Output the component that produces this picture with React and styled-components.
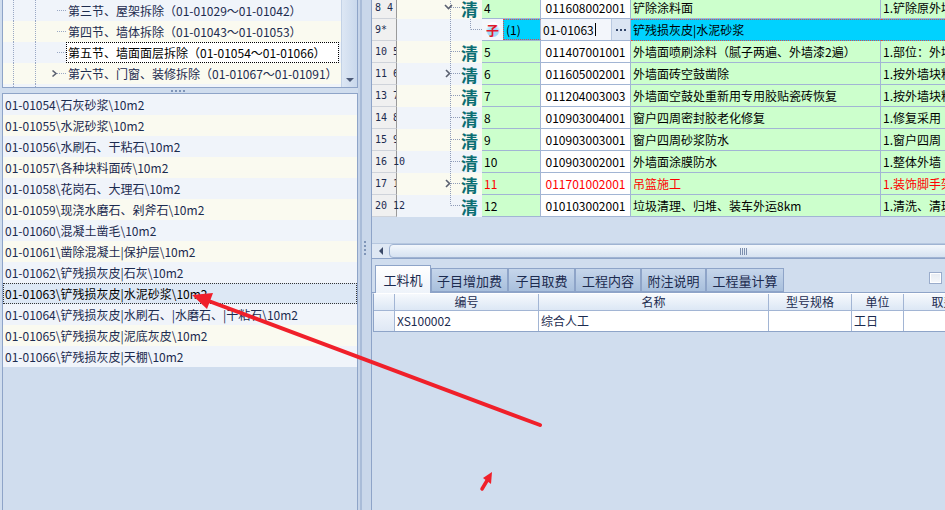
import React from 'react';
import styled, { createGlobalStyle } from 'styled-components';

const GlobalStyle = createGlobalStyle`
  html, body {
    margin: 0;
    padding: 0;
    background: #d0ddee;
  }
  body {
    font-family: "Noto Sans CJK SC", "Liberation Sans", sans-serif;
    font-size: 12px;
  }
`;

const treeItems = [
  { text: '第三节、屋架拆除（01-01029～01-01042）' },
  { text: '第四节、墙体拆除（01-01043～01-01053）' },
  { text: '第五节、墙面面层拆除（01-01054～01-01066）', selected: true },
  { text: '第六节、门窗、装修拆除（01-01067～01-01091）', expandable: true },
  { text: '第七节、地面拆除（01-01092～01-01110）' },
];

const listItems = [
  '01-01054\\石灰砂浆\\10m2',
  '01-01055\\水泥砂浆\\10m2',
  '01-01056\\水刷石、干粘石\\10m2',
  '01-01057\\各种块料面砖\\10m2',
  '01-01058\\花岗石、大理石\\10m2',
  '01-01059\\现浇水磨石、剁斧石\\10m2',
  '01-01060\\混凝土凿毛\\10m2',
  '01-01061\\凿除混凝土|保护层\\10m2',
  '01-01062\\铲残损灰皮|石灰\\10m2',
  '01-01063\\铲残损灰皮|水泥砂浆\\10m2',
  '01-01064\\铲残损灰皮|水刷石、|水磨石、|干粘石\\10m2',
  '01-01065\\铲残损灰皮|泥底灰皮\\10m2',
  '01-01066\\铲残损灰皮|天棚\\10m2',
];

// spill: the second number runs over into the tree column
const gridRows = [
  { hdr: '8 4', chevron: 'down', seq: '4', code: '011608002001', name: '铲除涂料面', desc: '1.铲除原外墙涂料' },
  { hdr: '9*', child: true, seq: '(1)', code: '01-01063', name: '铲残损灰皮|水泥砂浆', desc: '' },
  { hdr: '10 5', seq: '5', code: '011407001001', name: '外墙面喷刷涂料（腻子两遍、外墙漆2遍）', desc: '1.部位：外墙面' },
  { hdr: '11 6', chevron: 'right', seq: '6', code: '011605002001', name: '外墙面砖空鼓凿除', desc: '1.按外墙块料' },
  { hdr: '13 7', seq: '7', code: '011204003003', name: '外墙面空鼓处重新用专用胶贴瓷砖恢复', desc: '1.按外墙块料' },
  { hdr: '14 8', seq: '8', code: '010903004001', name: '窗户四周密封胶老化修复', desc: '1.修复采用' },
  { hdr: '15 9', seq: '9', code: '010903003001', name: '窗户四周砂浆防水', desc: '1.窗户四周' },
  { hdr: '16 10', spill: true, seq: '10', code: '010903002001', name: '外墙面涂膜防水', desc: '1.整体外墙' },
  { hdr: '17 11', chevron: 'right', red: true, seq: '11', code: '011701002001', name: '吊篮施工', desc: '1.装饰脚手架' },
  { hdr: '20 12', spill: true, last: true, seq: '12', code: '010103002001', name: '垃圾清理、归堆、装车外运8km', desc: '1.清洗、清理' },
];

const tabs = [
  { label: '工料机', width: 56, active: true },
  { label: '子目增加费', width: 77 },
  { label: '子目取费', width: 67 },
  { label: '工程内容', width: 66 },
  { label: '附注说明', width: 65 },
  { label: '工程量计算', width: 78 },
];

const subCols = [
  { label: '', width: 21 },
  { label: '编号', width: 144 },
  { label: '名称', width: 230 },
  { label: '型号规格', width: 83 },
  { label: '单位', width: 52 },
  { label: '取费', width: 80 },
];

const subRow = ['', 'XS100002', '综合人工', '', '工日', ''];

const App = () => (
  <>
    <GlobalStyle />
    <Screen>
      <LeftPane>
        <TreePanel>
          <TreeBody>
            {treeItems.map((item, i) => (
              <TreeRow key={i} $alt={i % 2 === 1}>
                <Connectors width="66" height="21">
                  <line x1="10.5" y1="0" x2="10.5" y2="21" stroke="#9aa8c4" strokeDasharray="1 1" />
                  <line x1="32.5" y1="0" x2="32.5" y2="21" stroke="#9aa8c4" strokeDasharray="1 1" />
                  <line x1="54" y1="10.5" x2="63" y2="10.5" stroke="#9aa8c4" strokeDasharray="1 1" />
                  {item.expandable && (
                    <path d="M49.5 7.5 L53 10.5 L49.5 13.5" fill="none" stroke="#5a6070" strokeWidth="1.6" />
                  )}
                </Connectors>
                <TreeLabel $selected={item.selected}>{item.text}</TreeLabel>
              </TreeRow>
            ))}
          </TreeBody>
          <VScroll>
            <DownArrow />
          </VScroll>
        </TreePanel>
        <HSplitter>
          <Grip />
        </HSplitter>
        <ListPanel>
          {listItems.map((t, i) => (
            <ListRow key={i} $alt={i % 2 === 1} $selected={i === 9}>
              {t}
            </ListRow>
          ))}
        </ListPanel>
      </LeftPane>

      <VSplitter>
        <VGrip />
      </VSplitter>

      <RightPane>
        <TopGrid>
          <GridRows>
            {gridRows.map((r, i) => (
              <GridRow key={i}>
                <RowHeader $spill={r.spill}>{r.hdr}</RowHeader>
                <TreeCell $alt={i % 2 === 1}>
                  <Connectors width="85" height="21">
                    <line x1="53.5" y1="0" x2="53.5" y2={r.last ? 10.5 : 21} stroke="#8f9cb8" strokeDasharray="1 1" />
                    {!r.child && <line x1="54" y1="10.5" x2="64" y2="10.5" stroke="#8f9cb8" strokeDasharray="1 1" />}
                    {r.child && (
                      <>
                        <line x1="73.5" y1="0" x2="73.5" y2="10.5" stroke="#8f9cb8" strokeDasharray="1 1" />
                        <line x1="74" y1="10.5" x2="85" y2="10.5" stroke="#8f9cb8" strokeDasharray="1 1" />
                      </>
                    )}
                    {r.chevron === 'down' && (
                      <path d="M48 8 L51.5 11.5 L55 8" fill="none" stroke="#5a6070" strokeWidth="1.6" />
                    )}
                    {r.chevron === 'right' && (
                      <path d="M49 7 L52.5 10.5 L49 14" fill="none" stroke="#5a6070" strokeWidth="1.6" />
                    )}
                  </Connectors>
                  {!r.child && <Qing>清</Qing>}
                </TreeCell>
                {r.child ? (
                  <>
                    <SeqChild>
                      <ZiBox>
                        <ZiIcon>子</ZiIcon>
                      </ZiBox>
                      <ChildSeq>{r.seq}</ChildSeq>
                    </SeqChild>
                    <EditCell>
                      <EditText>
                        {r.code}
                        <Caret />
                      </EditText>
                      <EllipsisButton>
                        <Dots />
                      </EllipsisButton>
                    </EditCell>
                    <Cell $tone="cyan" $marked>{r.name}</Cell>
                    <Cell $tone="cyan" $marked $last>{r.desc}</Cell>
                  </>
                ) : (
                  <>
                    <Cell $tone="green" $red={r.red}>{r.seq}</Cell>
                    <Cell $tone="white" $red={r.red} $center>{r.code}</Cell>
                    <Cell $tone="green" $red={r.red}>{r.name}</Cell>
                    <Cell $tone="green" $red={r.red} $last>{r.desc}</Cell>
                  </>
                )}
              </GridRow>
            ))}
          </GridRows>
          <GridFill />
          <HScroll>
            <ScrollButton>
              <LeftArrow />
            </ScrollButton>
            <ScrollThumb>
              <ThumbGrip />
            </ScrollThumb>
          </HScroll>
        </TopGrid>

        <TabBar>
          {tabs.map((t) => (
            <Tab key={t.label} $active={t.active} style={{ width: t.width }}>
              {t.label}
            </Tab>
          ))}
          <CheckBox />
        </TabBar>

        <SubGrid>
          <SubRow>
            {subCols.map((c, i) => (
              <SubHead key={i} style={{ width: c.width }}>
                {c.label}
              </SubHead>
            ))}
          </SubRow>
          <SubRow>
            {subCols.map((c, i) => (
              <SubCell key={i} $rowHead={i === 0} style={{ width: c.width }}>
                {subRow[i]}
              </SubCell>
            ))}
          </SubRow>
        </SubGrid>
      </RightPane>

      <Annotations viewBox="0 0 945 510" width="945" height="510">
        <line x1="540" y1="425" x2="206" y2="300" stroke="#f0202a" strokeWidth="4" strokeLinecap="round" />
        <polygon points="192,295 213,293 207,309" fill="#f0202a" />
        <line x1="482" y1="489" x2="488" y2="479" stroke="#f0202a" strokeWidth="3.5" strokeLinecap="round" />
        <polygon points="492,472 483,478 491,484" fill="#f0202a" />
      </Annotations>
    </Screen>
  </>
);

const Screen = styled.div`
  position: relative;
  width: 945px;
  height: 510px;
  overflow: hidden;
  display: flex;
  background: #d0ddee;
  color: #1c2b4f;
  font-family: "Noto Sans CJK SC", "Liberation Sans", sans-serif;
  font-size: 12px;
  line-height: 1;
`;

const LeftPane = styled.div`
  width: 356px;
  margin-left: 2px;
  display: flex;
  flex-direction: column;
`;

const TreePanel = styled.div`
  height: 88px;
  box-sizing: border-box;
  display: flex;
  border-left: 1px solid #8ea4c8;
  border-right: 1px solid #8ea4c8;
  border-bottom: 1px solid #8ea4c8;
  background: #f0f4fa;
`;

const TreeBody = styled.div`
  flex: 1;
  overflow: hidden;
`;

const TreeRow = styled.div`
  position: relative;
  height: 21px;
  display: flex;
  align-items: stretch;
  padding-left: 63px;
  background: ${(p) => (p.$alt ? '#fafaf0' : '#f0f4fa')};
`;

const Connectors = styled.svg`
  position: absolute;
  left: 0;
  top: 0;
  overflow: visible;
`;

const TreeLabel = styled.div`
  flex: 1;
  margin-right: 2px;
  display: flex;
  align-items: center;
  padding-left: 1px;
  white-space: nowrap;
  border: 1px dotted ${(p) => (p.$selected ? '#000' : 'transparent')};
  background: ${(p) => (p.$selected ? '#fff' : 'transparent')};
  color: ${(p) => (p.$selected ? '#000' : '#1c2b4f')};
`;

const VScroll = styled.div`
  width: 15px;
  position: relative;
  background: linear-gradient(90deg, #dde7f4, #c9d8ec);
  border-left: 1px solid #c3d2e6;
`;

const DownArrow = styled.div`
  position: absolute;
  left: 4px;
  bottom: 5px;
  width: 0;
  height: 0;
  border-left: 4px solid transparent;
  border-right: 4px solid transparent;
  border-top: 4px solid #4c5a78;
`;

const HSplitter = styled.div`
  height: 5px;
  display: flex;
  justify-content: center;
  align-items: center;
  padding-right: 2px;
`;

const Grip = styled.div`
  width: 14px;
  height: 2px;
  margin-left: -2px;
  background: repeating-linear-gradient(90deg, #7f95b8 0 2px, transparent 2px 4px);
`;

const ListPanel = styled.div`
  flex: 1;
  border: 1px solid #8ea4c8;
  border-bottom: none;
  background: #d0ddee;
`;

const ListRow = styled.div`
  height: 21px;
  box-sizing: border-box;
  display: flex;
  align-items: center;
  padding-left: 1px;
  white-space: nowrap;
  overflow: hidden;
  background: ${(p) => (p.$selected ? '#dde8f5' : p.$alt ? '#fafaf0' : '#f0f4fa')};
  border: 1px dotted ${(p) => (p.$selected ? '#333' : 'transparent')};
  color: ${(p) => (p.$selected ? '#000' : '#1c2b4f')};
`;

const VSplitter = styled.div`
  width: 13px;
  box-sizing: border-box;
  display: flex;
  flex-direction: column;
  align-items: center;
  padding-top: 241px;
  border-left: 2px solid #c6d4e8;
  background: linear-gradient(90deg, #a9bcd8 0 2px, #c9d7ea 2px);
`;

const VGrip = styled.div`
  width: 2px;
  height: 14px;
  margin-left: -2px;
  background: repeating-linear-gradient(180deg, #7f95b8 0 2px, transparent 2px 4px);
`;

const RightPane = styled.div`
  flex: 1;
  min-width: 0;
  display: flex;
  flex-direction: column;
  border-left: 1px solid #8ea4c8;
`;

const TopGrid = styled.div`
  height: 259px;
  box-sizing: border-box;
  display: flex;
  flex-direction: column;
  border-bottom: 1px solid #8ea4c8;
  overflow: hidden;
`;

const GridRows = styled.div`
  margin-top: -3px;
`;

const GridRow = styled.div`
  display: grid;
  grid-template-columns: 25px 85px 59px 90px 250px 1fr;
  height: 22px;
`;

const RowHeader = styled.div`
  position: relative;
  z-index: 1;
  box-sizing: border-box;
  padding: 0 0 0 3px;
  display: flex;
  align-items: center;
  white-space: pre;
  overflow: ${(p) => (p.$spill ? 'visible' : 'hidden')};
  background: #f0f0f0;
  border-right: 1px solid #9a9a9a;
  border-bottom: 1px solid #cfd3da;
  color: #1c2b4f;
  font-family: "DejaVu Sans Mono", "Liberation Mono", monospace;
  font-size: 10px;
`;

const TreeCell = styled.div`
  position: relative;
  box-sizing: border-box;
  display: flex;
  align-items: center;
  padding-left: 64px;
  background: ${(p) => (p.$alt ? '#f0f4fa' : '#fafaf0')};
`;

const Qing = styled.span`
  position: relative;
  font-size: 17px;
  font-weight: 700;
  color: #0b6e72;
  margin-top: 1px;
`;

const toneBg = { green: '#ccffcc', white: '#ffffff', cyan: '#00d2ff' };

const Cell = styled.div`
  box-sizing: border-box;
  min-width: 0;
  display: flex;
  align-items: center;
  justify-content: ${(p) => (p.$center ? 'center' : 'flex-start')};
  padding-left: ${(p) => (p.$center ? '0' : '2px')};
  white-space: nowrap;
  overflow: hidden;
  background: ${(p) => toneBg[p.$tone]};
  color: ${(p) => (p.$red ? '#ff0000' : '#000')};
  border-right: ${(p) => (p.$last ? 'none' : '1px solid #a2b5d4')};
  border-bottom: 1px solid #a2b5d4;
  ${(p) => p.$marked && 'border-top: 1px dotted #e04848; border-bottom: 1px dotted #e04848; border-right-color: transparent;'}
`;

const SeqChild = styled.div`
  display: flex;
  border-bottom: 1px solid #a2b5d4;
`;

const ZiBox = styled.div`
  width: 21px;
  display: flex;
  align-items: center;
  justify-content: center;
  background: #f4f6fb;
`;

const ZiIcon = styled.span`
  width: 14px;
  height: 15px;
  display: flex;
  align-items: center;
  justify-content: center;
  border-radius: 50%;
  background: radial-gradient(circle at 50% 70%, #9fd8f8 0 35%, #ffffff 70%);
  color: #e0182c;
  font-size: 13px;
  font-weight: 700;
`;

const ChildSeq = styled.div`
  flex: 1;
  box-sizing: border-box;
  display: flex;
  align-items: center;
  padding-left: 2px;
  background: #00d2ff;
  color: #000;
  border: 1px dotted #e04848;
  border-right: 1px solid #a2b5d4;
`;

const EditCell = styled.div`
  box-sizing: border-box;
  display: flex;
  background: #f3f6fb;
  border-right: 1px solid #a2b5d4;
  border-bottom: 1px solid #a2b5d4;
`;

const EditText = styled.div`
  flex: 1;
  display: flex;
  align-items: center;
  padding-left: 2px;
  color: #000;
`;

const Caret = styled.span`
  display: inline-block;
  width: 1px;
  height: 13px;
  margin-left: 1px;
  background: #000;
`;

const EllipsisButton = styled.div`
  width: 18px;
  display: flex;
  align-items: center;
  justify-content: center;
  background: #dbe5f3;
  border-left: 1px solid #b8c8e0;
`;

const Dots = styled.span`
  width: 10px;
  height: 2px;
  background: repeating-linear-gradient(90deg, #34466a 0 2px, transparent 2px 4px);
`;

const GridFill = styled.div`
  flex: 1;
`;

const HScroll = styled.div`
  height: 14px;
  display: flex;
  overflow: hidden;
  background: #dfe8f4;
  border-top: 1px solid #b6c7df;
`;

const ScrollButton = styled.div`
  width: 17px;
  flex: none;
  display: flex;
  align-items: center;
  justify-content: center;
`;

const LeftArrow = styled.div`
  width: 0;
  height: 0;
  border-top: 4px solid transparent;
  border-bottom: 4px solid transparent;
  border-right: 4px solid #3c4a68;
`;

const ScrollThumb = styled.div`
  flex: 0 0 710px;
  box-sizing: border-box;
  display: flex;
  align-items: center;
  justify-content: center;
  border: 1px solid #9fb3d2;
  border-radius: 4px 0 0 4px;
  background: linear-gradient(180deg, #f3f7fc, #d6e2f1);
`;

const ThumbGrip = styled.div`
  width: 8px;
  height: 7px;
  background: repeating-linear-gradient(90deg, #7d8fae 0 1px, transparent 1px 2px);
`;

const TabBar = styled.div`
  height: 34px;
  box-sizing: border-box;
  display: flex;
  align-items: flex-end;
  padding-left: 3px;
  border-bottom: 1px solid #8ea4c8;
`;

const Tab = styled.div`
  box-sizing: border-box;
  height: ${(p) => (p.$active ? '28px' : '24px')};
  margin-bottom: ${(p) => (p.$active ? '-1px' : '0')};
  display: flex;
  align-items: center;
  justify-content: center;
  border: 1px solid #8ea4c8;
  border-bottom: ${(p) => (p.$active ? 'none' : '1px solid #8ea4c8')};
  background: ${(p) =>
    p.$active
      ? 'linear-gradient(180deg, #ffffff, #eef3fa)'
      : 'linear-gradient(180deg, #c6d6eb, #a8bfdc)'};
  color: #1c2b4f;
  font-size: 13px;
  white-space: nowrap;
`;

const CheckBox = styled.div`
  align-self: flex-start;
  margin: 13px 3px 0 auto;
  width: 13px;
  height: 12px;
  box-sizing: border-box;
  border: 1px solid #9aaccb;
  background: linear-gradient(180deg, #e6ebf2, #f6f8fb);
  box-shadow: inset 0 0 0 1px #fff;
`;

const SubGrid = styled.div`
  margin-left: 1px;
  display: flex;
  flex-direction: column;
  border-left: 1px solid #8ea4c8;
  border-bottom: 1px solid #8ea4c8;
  border-top: 1px solid #ffffff;
`;

const SubRow = styled.div`
  display: flex;
  white-space: nowrap;
`;

const SubHead = styled.div`
  flex: none;
  box-sizing: border-box;
  height: 17px;
  display: flex;
  align-items: center;
  justify-content: center;
  background: linear-gradient(180deg, #f6f9fd, #dce7f5);
  border-right: 1px solid #a2b5d4;
  border-bottom: 1px solid #a2b5d4;
  color: #1c2b4f;
`;

const SubCell = styled.div`
  flex: none;
  box-sizing: border-box;
  height: 20px;
  display: flex;
  align-items: center;
  padding-left: 2px;
  background: ${(p) => (p.$rowHead ? 'linear-gradient(180deg, #f1f5fb, #dfe8f5)' : '#ffffff')};
  border-right: 1px solid #a2b5d4;
  color: #1c2b4f;
`;

const Annotations = styled.svg`
  position: absolute;
  left: 0;
  top: 0;
  pointer-events: none;
`;

export default App;
